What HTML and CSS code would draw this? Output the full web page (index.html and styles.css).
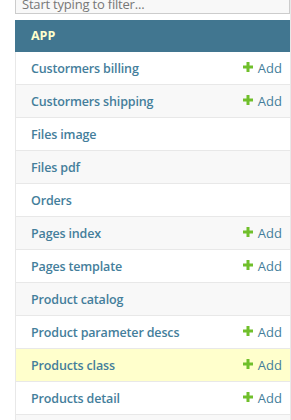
FILE: index.html
```html
<!DOCTYPE html>
<html lang="en">
<head>
	<meta charset="utf-8">
	<meta name="viewport" content="width=device-width, initial-scale=1.0" />
	<title>Site administration</title>

	<link rel="stylesheet" href="styles.css">
</head>
<body>
	<div class="main">
		<div class="toggle"></div>

		<nav class="sidebar">
			<input type="search" class="nav-filter" placeholder="Start typing to filter...">

			<table class="module">
				<caption>App</caption>
				<tr class="row1">
					<th>Custormers billing</th>
					<td><span class="addlink"><svg width="10" height="10" viewBox="0 0 10 10"><path d="M3.5 0h3v3.5h3.5v3h-3.5v3.5h-3v-3.5h-3.5v-3h3.5z"/></svg>Add</span></td>
				</tr>
				<tr class="row2">
					<th>Custormers shipping</th>
					<td><span class="addlink"><svg width="10" height="10" viewBox="0 0 10 10"><path d="M3.5 0h3v3.5h3.5v3h-3.5v3.5h-3v-3.5h-3.5v-3h3.5z"/></svg>Add</span></td>
				</tr>
				<tr class="row1">
					<th>Files image</th>
					<td></td>
				</tr>
				<tr class="row2">
					<th>Files pdf</th>
					<td></td>
				</tr>
				<tr class="row1">
					<th>Orders</th>
					<td></td>
				</tr>
				<tr class="row2">
					<th>Pages index</th>
					<td><span class="addlink"><svg width="10" height="10" viewBox="0 0 10 10"><path d="M3.5 0h3v3.5h3.5v3h-3.5v3.5h-3v-3.5h-3.5v-3h3.5z"/></svg>Add</span></td>
				</tr>
				<tr class="row1">
					<th>Pages template</th>
					<td><span class="addlink"><svg width="10" height="10" viewBox="0 0 10 10"><path d="M3.5 0h3v3.5h3.5v3h-3.5v3.5h-3v-3.5h-3.5v-3h3.5z"/></svg>Add</span></td>
				</tr>
				<tr class="row2">
					<th>Product catalog</th>
					<td></td>
				</tr>
				<tr class="row1">
					<th>Product parameter descs</th>
					<td><span class="addlink"><svg width="10" height="10" viewBox="0 0 10 10"><path d="M3.5 0h3v3.5h3.5v3h-3.5v3.5h-3v-3.5h-3.5v-3h3.5z"/></svg>Add</span></td>
				</tr>
				<tr class="row2 current-model">
					<th>Products class</th>
					<td><span class="addlink"><svg width="10" height="10" viewBox="0 0 10 10"><path d="M3.5 0h3v3.5h3.5v3h-3.5v3.5h-3v-3.5h-3.5v-3h3.5z"/></svg>Add</span></td>
				</tr>
				<tr class="row1">
					<th>Products detail</th>
					<td><span class="addlink"><svg width="10" height="10" viewBox="0 0 10 10"><path d="M3.5 0h3v3.5h3.5v3h-3.5v3.5h-3v-3.5h-3.5v-3h3.5z"/></svg>Add</span></td>
				</tr>
				<tr class="row2">
					<th>Products image</th>
					<td></td>
				</tr>
			</table>
		</nav>
	</div>
</body>
</html>
```

FILE: styles.css
```css
html {
	font: 12.5px/16px "Open Sans", sans-serif;
}

body {
	margin: 0;
	color: #333;
	background: #fff;
	overflow: hidden;
}

.main {
	display: flex;
	height: 420px;
}

.toggle {
	flex: 0 0 15px;
}

/* sidebar, 275px + hairline on the right */
.sidebar {
	flex: 0 0 275px;
	border-right: 1px solid #e8e8e8;
}

.nav-filter {
	display: block;
	width: 100%;
	box-sizing: border-box;
	height: 20px;
	margin: -6px 0 6px;
	padding: 0 6px;
	border: 1px solid #ccc;
	background: #f8f8f8;
	font: inherit;
	font-size: 13px;
	letter-spacing: -0.2px;
	color: #333;
	outline: none;
}

.nav-filter::placeholder {
	color: #777;
}

.module {
	width: 100%;
	border-collapse: collapse;
	border-spacing: 0;
	font: inherit;
}

.module caption {
	text-align: left;
	padding: 8px 16px;
	background: #417690;
	color: #ffc;
	font-weight: bold;
	text-transform: uppercase;
}

th, td {
	padding: 8px;
	border-bottom: 1px solid #e8e8e8;
	vertical-align: top;
	color: #447e9b;
}

th {
	width: 100%;
	text-align: left;
	font-weight: 600;
	letter-spacing: -0.15px;
	padding: 9px 8px 7px 15px;
	border-left: 1px solid #e8e8e8;
}

td {
	white-space: nowrap;
	font-size: 13px;
}

.row1 {
	background: #fff;
}

.row2 {
	background: #f8f8f8;
}

.current-model {
	background: #ffc;
}

.addlink {
	display: flex;
	align-items: flex-start;
	gap: 5px;
}

.addlink svg {
	margin-top: 2px;
	fill: #70bf2b;
}
```
